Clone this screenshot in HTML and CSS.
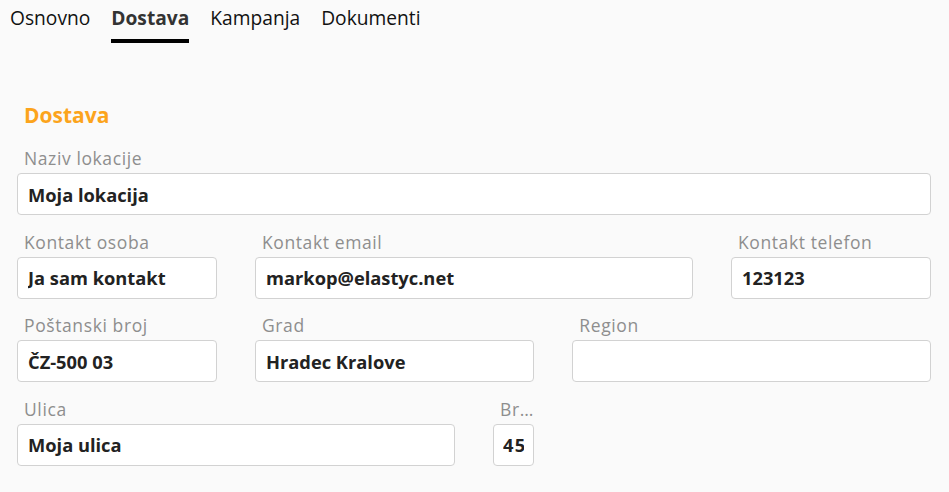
FILE: index.html
```html
<!DOCTYPE html>
<html lang="hr">
<head>
<meta charset="utf-8">
<title>Dostava</title>
<link rel="stylesheet" href="styles.css">
</head>
<body>
<nav class="tabs">
  <a class="tab">Osnovno</a>
  <a class="tab active">Dostava</a>
  <a class="tab">Kampanja</a>
  <a class="tab">Dokumenti</a>
</nav>
<main class="form">
  <h2 class="section-title">Dostava</h2>
  <div class="grid">
    <div class="field span-12">
      <label class="label">Naziv lokacije</label>
      <input class="input" type="text" value="Moja lokacija">
    </div>
    <div class="field span-3">
      <label class="label">Kontakt osoba</label>
      <input class="input" type="text" value="Ja sam kontakt">
    </div>
    <div class="field span-6">
      <label class="label">Kontakt email</label>
      <input class="input" type="text" value="markop@elastyc.net">
    </div>
    <div class="field span-3">
      <label class="label">Kontakt telefon</label>
      <input class="input" type="text" value="123123">
    </div>
    <div class="field span-3">
      <label class="label">Poštanski broj</label>
      <input class="input" type="text" value="ČZ-500 03">
    </div>
    <div class="field span-4">
      <label class="label">Grad</label>
      <input class="input" type="text" value="Hradec Kralove">
    </div>
    <div class="field span-5">
      <label class="label">Region</label>
      <input class="input" type="text" value="">
    </div>
    <div class="field span-6">
      <label class="label">Ulica</label>
      <input class="input" type="text" value="Moja ulica">
    </div>
    <div class="field span-1">
      <label class="label">Broj</label>
      <input class="input input-narrow" type="text" value="45">
    </div>
  </div>
</main>
</body>
</html>
```

FILE: styles.css
```css
* { box-sizing: border-box; }
html, body { margin: 0; padding: 0; }
body {
  background: #fafafa;
  font-family: "Open Sans", "Noto Sans", sans-serif;
  color: #111;
  width: 949px;
  height: 492px;
  overflow: hidden;
}
.tabs {
  display: flex;
  gap: 21px;
  padding: 4px 0 0 10px;
}
.tab {
  font-size: 19.2px;
  line-height: 28px;
  padding-bottom: 7px;
  border-bottom: 4px solid transparent;
  color: #111;
}
.tab.active {
  font-weight: 700;
  color: #333;
  border-bottom-color: #000;
}
.form {
  padding: 57px 18px 0 17px;
}
.section-title {
  margin: 0 0 15px 7px;
  font-size: 21px;
  line-height: 30px;
  font-weight: 700;
  color: #fca41c;
}
.grid {
  display: grid;
  grid-template-columns: repeat(12, 1fr);
  column-gap: 38px;
  row-gap: 13.5px;
}
.field { display: flex; flex-direction: column; min-width: 0; }
.span-1 { grid-column: span 1; }
.span-3 { grid-column: span 3; }
.span-4 { grid-column: span 4; }
.span-5 { grid-column: span 5; }
.span-6 { grid-column: span 6; }
.span-12 { grid-column: span 12; }
.label {
  font-size: 17.5px;
  letter-spacing: 0.6px;
  line-height: 26px;
  margin-bottom: 2px;
  padding-left: 7px;
  color: #8e8e8e;
  white-space: nowrap;
  overflow: hidden;
  text-overflow: ellipsis;
}
.input {
  width: 100%;
  height: 42px;
  border: 1px solid #d2d2d2;
  border-radius: 4px;
  background: #fff;
  padding: 0 10px;
  font-family: inherit;
  font-size: 18.3px;
  font-weight: 700;
  color: #222;
  outline: none;
}
.input-narrow {
  padding-left: 9px;
  padding-right: 9px;
  letter-spacing: 1.4px;
}
```
